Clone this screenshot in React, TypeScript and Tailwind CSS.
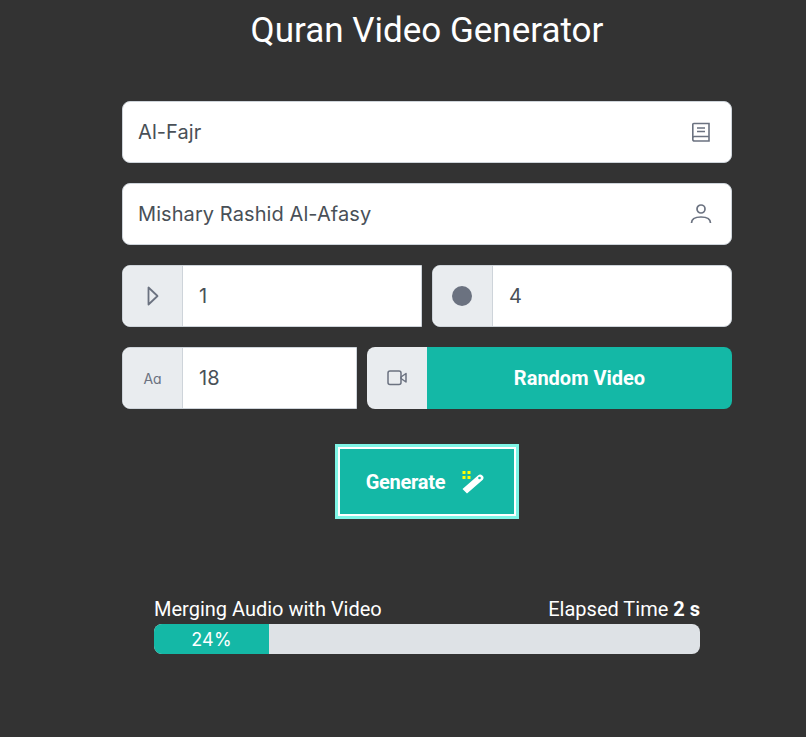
import { ReactNode } from "react";

const Addon = ({ children }: { children: ReactNode }) => (
  <div className="w-[60px] shrink-0 flex items-center justify-center bg-[#e9ecef] border-r border-[#ced4da] rounded-l-lg">
    {children}
  </div>
);

const BookIcon = () => (
  <svg width="20" height="20" viewBox="0 0 20 20" fill="none" stroke="#6b7280" strokeWidth="1.6">
    <path d="M1.800 16V2.500a1 1 0 0 1 1-1H18V19H3.600a1.800 1.800 0 0 1-1.800-1.800V16a1.500 1.500 0 0 1 1.500-1.500H18" />
    <path d="M6 6h8M6 9.500h8" />
  </svg>
);

const UserIcon = () => (
  <svg width="22" height="20" viewBox="0 0 22 20" fill="none" stroke="#6b7280" strokeWidth="1.7">
    <circle cx="11" cy="5" r="4" />
    <path d="M1.500 19c0-4 3-6 9.500-6s9.500 2 9.500 6" />
  </svg>
);

const PlayIcon = () => (
  <svg width="12" height="20" viewBox="0 0 12 20" fill="none" stroke="#6b7280" strokeWidth="1.8">
    <path d="M1.500 1.500v17l9-8.500z" strokeLinejoin="round" />
  </svg>
);

const VideoIcon = () => (
  <svg width="20" height="16" viewBox="0 0 20 16" fill="none" stroke="#6b7280" strokeWidth="1.500">
    <rect x="1" y="1" width="13" height="13.500" rx="2" />
    <path d="M14 7l5-3.500v8.500l-5-3.500z" strokeLinejoin="round" />
  </svg>
);

const WandIcon = () => (
  <svg width="22" height="24" viewBox="0 0 22 24">
    <path d="M0.500 19L16 5.500a3.200 3.200 0 0 1 4.800 4.200L5 23.500z" fill="#fff" />
    <circle cx="17.500" cy="8" r="1.300" fill="#14b8a6" />
    <path d="M0.500 1h3v3h-3zM5.500 1h3v3h-3zM0.500 6h3v3h-3zM5.500 6h3v3h-3z" fill="#ffff00" />
  </svg>
);

const inputText = "font-['Inter',sans-serif] text-[20px] tracking-[0.08px] text-[#495057]";

export default function App() {
  return (
    <div className="min-h-[737px] bg-[#333333] overflow-hidden">
      <div className="w-[610px] ml-[122px]">
        <h1 className="h-[61px] pt-[6px] text-center font-['Roboto',sans-serif] text-[35px] leading-[50px] text-white whitespace-nowrap">
          Quran Video Generator
        </h1>

        <div className="mt-[40px] flex flex-col gap-5">
          <div className="h-[62px] flex items-center justify-between bg-white border border-[#ced4da] rounded-lg pl-[15px] pr-5">
            <span className={inputText}>Al-Fajr</span>
            <BookIcon />
          </div>
          <div className="h-[62px] flex items-center justify-between bg-white border border-[#ced4da] rounded-lg pl-[15px] pr-[19px]">
            <span className={inputText}>Mishary Rashid Al-Afasy</span>
            <UserIcon />
          </div>

          <div className="h-[62px] flex gap-[10px]">
            <div className="w-[300px] flex border border-[#ced4da] rounded-l-lg bg-white">
              <Addon>
                <PlayIcon />
              </Addon>
              <span className={`${inputText} self-center pl-4`}>1</span>
            </div>
            <div className="w-[300px] flex border border-[#ced4da] rounded-lg bg-white">
              <Addon>
                <span className="w-5 h-5 mr-[2px] rounded-full bg-[#6b7280]" />
              </Addon>
              <span className={`${inputText} self-center pl-4`}>4</span>
            </div>
          </div>

          <div className="h-[62px] flex gap-[10px]">
            <div className="w-[235px] flex border border-[#ced4da] rounded-l-lg bg-white">
              <Addon>
                <span className="font-['Inter',sans-serif] text-[#6b7280] leading-none">
                  <span className="text-[14px]">A</span>
                  <span className="text-[14px]">ɑ</span>
                </span>
              </Addon>
              <span className={`${inputText} self-center pl-4`}>18</span>
            </div>
            <div className="w-[365px] flex rounded-lg overflow-hidden">
              <div className="w-[60px] shrink-0 flex items-center justify-center bg-[#e9ecef]">
                <VideoIcon />
              </div>
              <div className="flex-1 flex items-center justify-center bg-[#14b8a6] font-['Roboto',sans-serif] font-bold text-[20px] text-white">
                Random Video
              </div>
            </div>
          </div>
        </div>

        <div className="mt-[35px] flex justify-center">
          <div className="w-[184px] h-[75px] border-[3px] border-[#7ff5e6]">
            <div className="h-full pr-[4px] flex items-center justify-center gap-[17px] bg-[#14b8a6] border-[2px] border-white">
              <span className="font-['Roboto',sans-serif] font-bold text-[20px] tracking-[-0.25px] text-white">Generate</span>
              <WandIcon />
            </div>
          </div>
        </div>

        <div className="mt-[79px] mx-8">
          <div className="h-[26px] pb-1 flex items-center justify-between font-['Roboto',sans-serif] text-[20px] text-white">
            <span>Merging Audio with Video</span>
            <span>
              Elapsed Time <b>2 s</b>
            </span>
          </div>
          <div className="h-[30px] flex bg-[#dee2e6] rounded-lg overflow-hidden">
            <div className="w-[115px] flex items-center justify-center bg-[#14b8a6] font-['Inter',sans-serif] text-[18px] tracking-[0.2px] text-white">
              24%
            </div>
          </div>
        </div>
      </div>
    </div>
  );
}
